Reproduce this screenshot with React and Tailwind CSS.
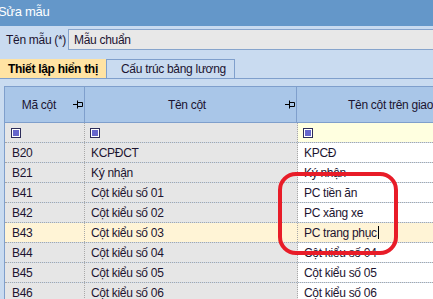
import React from 'react';

const rows = [
  { code: 'B20', name: 'KCPĐCT', label: 'KPCĐ' },
  { code: 'B21', name: 'Ký nhận', label: 'Ký nhận' },
  { code: 'B41', name: 'Cột kiểu số 01', label: 'PC tiền ăn' },
  { code: 'B42', name: 'Cột kiểu số 02', label: 'PC xăng xe' },
  { code: 'B43', name: 'Cột kiểu số 03', label: 'PC trang phục', selected: true },
  { code: 'B44', name: 'Cột kiểu số 04', label: 'Cột kiểu số 04' },
  { code: 'B45', name: 'Cột kiểu số 05', label: 'Cột kiểu số 05' },
  { code: 'B46', name: 'Cột kiểu số 06', label: 'Cột kiểu số 06' },
];

const Pin = () => (
  <svg width="10" height="9" viewBox="0 0 10 9" className="shrink-0">
    <path d="M0 4.5H4M4.5 0.5V8.5M4.5 2.5H9.5V6.5H4.5" fill="none" stroke="#000" strokeWidth="1" />
  </svg>
);

const FilterBox = () => (
  <span className="flex h-[10px] w-[10px] items-center justify-center border border-[#2d2d5a] bg-white">
    <span className="h-[6px] w-[6px] bg-[#6666cc]" />
  </span>
);

export default function App() {
  return (
    <div className="relative h-[299px] w-[433px] overflow-hidden bg-[#c9dbf0] font-['Liberation_Sans',Arial,sans-serif] text-[12px] tracking-[-0.3px] text-[#1c1430]">
      {/* Title */}
      <div className="flex h-[26px] items-center bg-[#6497c9] pb-[2px] text-[13px] text-white">
        <span className="-ml-[2px]">Sửa mẫu</span>
      </div>

      {/* Name field */}
      <div className="mt-[3px] flex h-[21px] items-center">
        <span className="w-[68px] pl-[6px]">Tên mẫu (*)</span>
        <div className="flex h-full flex-1 items-center border border-r-0 border-[#86a4cc] bg-[#e8e8e8] pl-[5px]">
          Mẫu chuẩn
        </div>
      </div>

      {/* Tabs */}
      <div className="mt-[9px] flex h-[20px] border-b border-[#7f9fcc]">
        <div className="flex w-[106px] items-center bg-[#ffe3a3] pl-[8px] font-bold text-black">Thiết lập hiển thị</div>
        <div className="flex w-[129px] items-center border-x border-t border-[#7f9fcc] pl-[14px]">Cấu trúc bảng lương</div>
      </div>

      {/* Grid */}
      <div className="ml-[4px] mt-[7px] border-l border-t border-[#7f9fcc]">
        <div className="flex h-[36px] border-b border-[#7f9fcc] bg-[#a9c6e8]">
          <div className="flex w-[80px] items-center border-r border-[#7f9fcc]">
            <span className="flex-1 text-center">Mã cột</span>
            <span className="pr-[1px]"><Pin /></span>
          </div>
          <div className="flex w-[213px] items-center border-r border-[#7f9fcc]">
            <span className="flex-1 pl-[4px] text-center">Tên cột</span>
            <span className="pr-[1px]"><Pin /></span>
          </div>
          <div className="flex flex-1 items-center whitespace-nowrap pl-[51px]">Tên cột trên giao</div>
        </div>

        <div className="flex h-[20px] border-b border-dotted border-[#a8a8a8]">
          <div className="flex w-[80px] items-center border-r border-dotted border-[#a8a8a8] bg-[#e6e6e6] pl-[6px]"><FilterBox /></div>
          <div className="flex w-[213px] items-center border-r border-dotted border-[#a8a8a8] bg-[#e6e6e6] pl-[5px]"><FilterBox /></div>
          <div className="flex flex-1 items-center bg-[#ffffe0] pl-[5px]"><FilterBox /></div>
        </div>

        {rows.map((r) => (
          <div key={r.code} className="flex h-[20px] border-b border-dotted border-[#a8a8a8]">
            <div className={`flex w-[80px] items-center border-r border-dotted border-[#a8a8a8] pl-[7px] ${r.selected ? 'bg-[#fff4d6]' : 'bg-[#e6e6e6]'}`}>{r.code}</div>
            <div className={`flex w-[213px] items-center border-r border-dotted border-[#a8a8a8] pl-[6px] ${r.selected ? 'bg-[#fff4d6]' : 'bg-[#e6e6e6]'}`}>{r.name}</div>
            <div className={`flex flex-1 items-center whitespace-nowrap pl-[6px] ${r.selected ? 'bg-[#fff4d6]' : 'bg-white'}`}>
              {r.label}
              {r.selected && <span className="ml-px h-[13px] border-l border-black" />}
            </div>
          </div>
        ))}
      </div>

      {/* Red annotation */}
      <div className="absolute left-[278px] top-[172px] h-[83px] w-[120px] rounded-[18px] border-4 border-[#e81c28]" />
    </div>
  );
}
